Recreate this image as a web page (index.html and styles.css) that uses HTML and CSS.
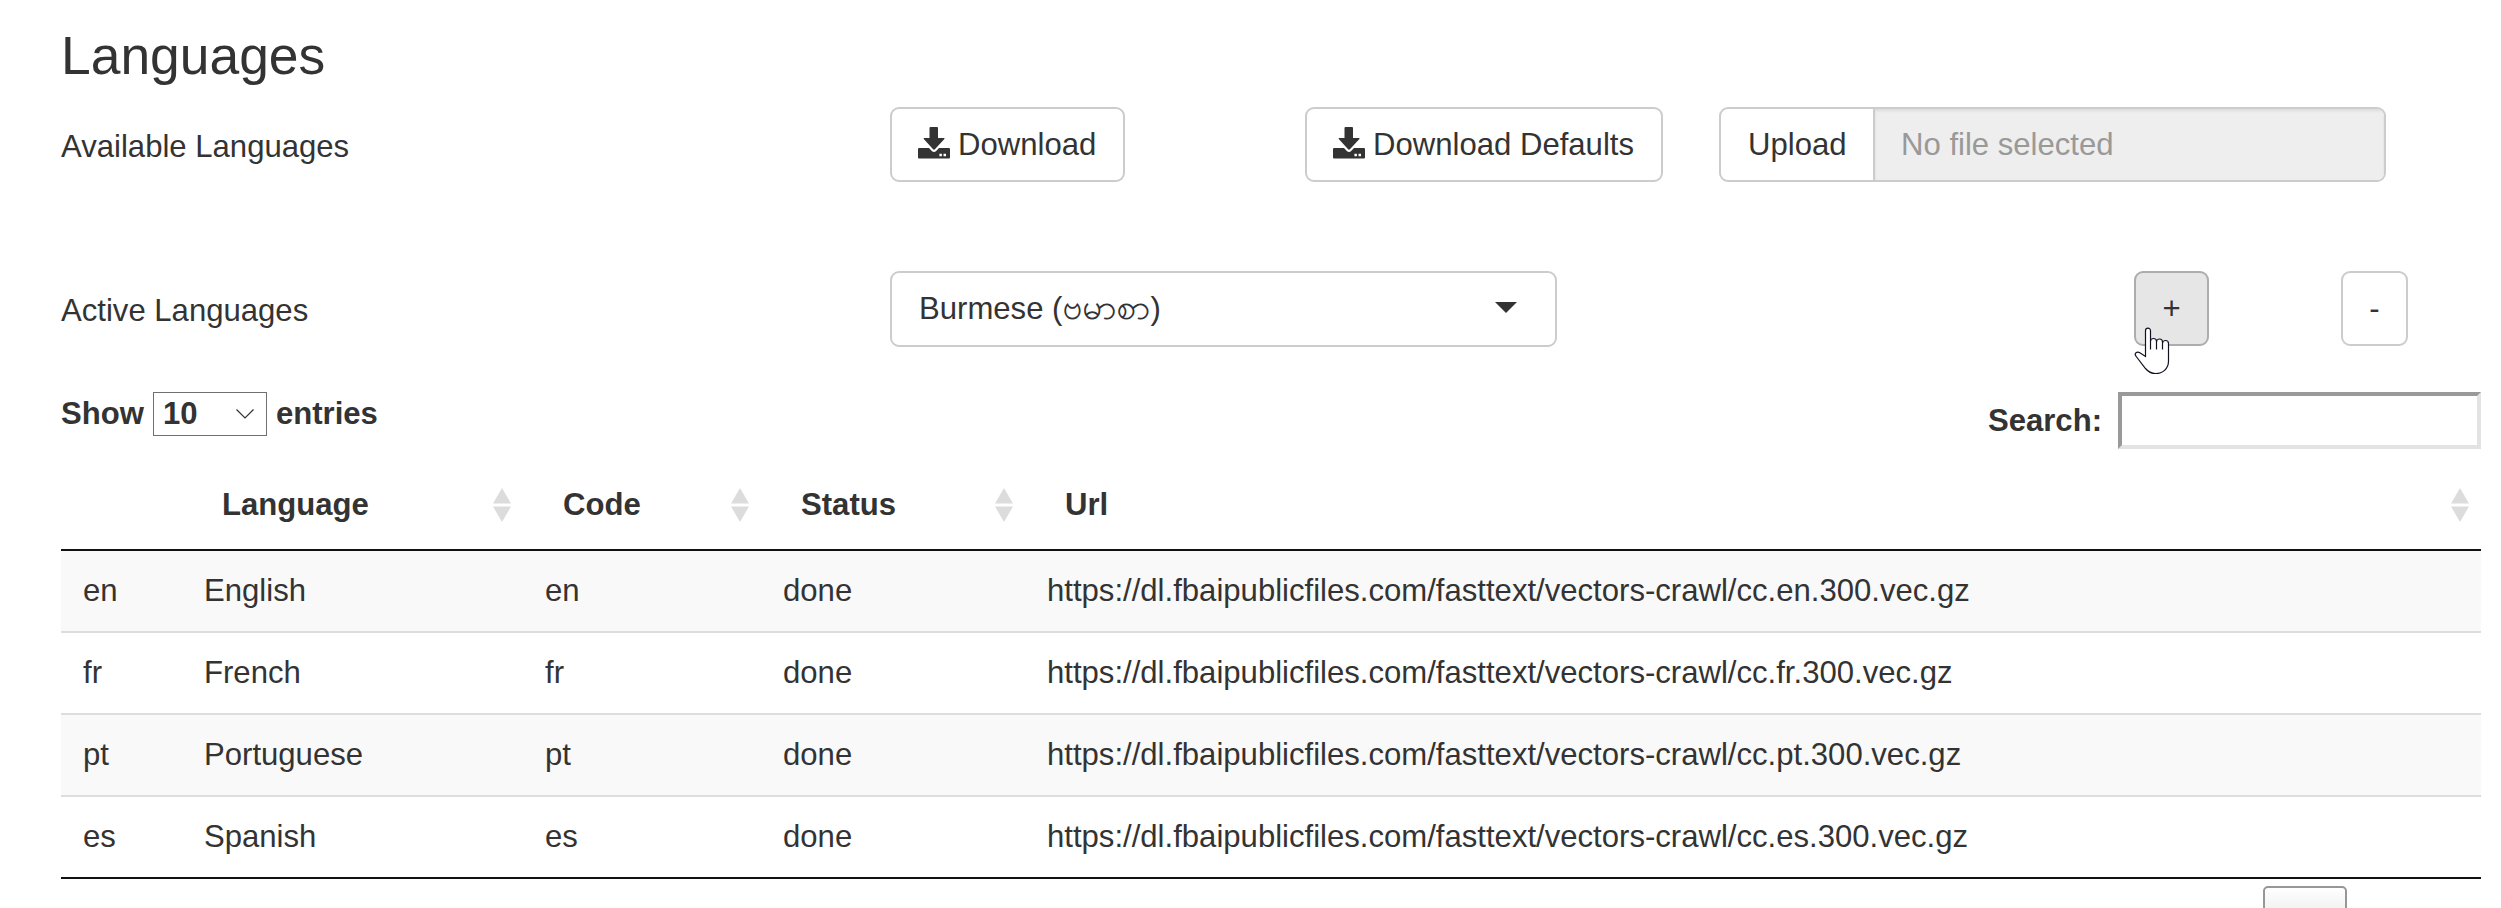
FILE: index.html
```html
<!DOCTYPE html>
<html lang="en">
<head>
<meta charset="utf-8">
<title>Languages</title>
<link rel="stylesheet" href="styles.css">
</head>
<body>
<svg class="defs" width="0" height="0" aria-hidden="true">
  <symbol id="install" viewBox="0 0 32 32">
    <path d="M12.500 0h6.500q1 0 1 1v10h6q1 .200.400 1L16.900 22.300q-.900.900-1.800 0L5.800 12q-.600-.800.400-1h5.300V1q0-1 1-1z"/>
    <path fill-rule="evenodd" d="M1 21h10l2.800 3q2.200 2 4.400 0L21 21h10q1 0 1 1v8.500q0 1-1 1H1q-1 0-1-1V22q0-1 1-1zM21.400 26.700v2.500h2.500v-2.500zM25.500 26.700v2.500H28v-2.500z"/>
  </symbol>
  <symbol id="sort" viewBox="0 0 20 34">
    <path d="M10 0l9 15.500H1zM10 34l9-15.500H1z"/>
  </symbol>
</svg>
<main class="page">
  <h2 class="title">Languages</h2>
  <section class="row row-available">
    <div class="cell-label">Available Languages</div>
    <div class="cell-select"><button class="btn"><svg class="icon"><use href="#install"/></svg>Download</button></div>
    <div class="cell-defaults"><button class="btn"><svg class="icon"><use href="#install"/></svg>Download Defaults</button></div>
    <div class="upload"><span class="upload-btn">Upload</span><span class="upload-file">No file selected</span></div>
  </section>
  <section class="row row-active">
    <div class="cell-label">Active Languages</div>
    <div class="select"><span>Burmese (<span class="native">ဗမာစာ</span>)</span><svg class="caret" viewBox="0 0 22 11"><path d="M0 0h22L11 11z"/></svg></div>
    <div class="actions">
      <button class="btn btn-add">+<svg class="pointer" viewBox="-1 -1 36 48"><path d="M10.500 28.500V2.700a2.500 2.500 0 0 1 5 0V21.500V13.500a2.800 2.800 0 0 1 6 0V21.500V14a2.900 2.900 0 0 1 6 0V21.500V15.500a2.900 2.900 0 0 1 6 0V33c0 7.500-5.500 12.500-13 12.500-4.500 0-7.500-2-10-5L1.200 28.500c-2.600-3.500.800-5.500 4-3.500z"/></svg></button>
      <button class="btn btn-remove">-</button>
    </div>
  </section>
  <div class="controls">
    <div class="length">Show <span class="length-select">10<svg class="chevron" viewBox="0 0 18 10"><path d="M.500.500L9 9L17.500.500"/></svg></span> entries</div>
    <label class="search">Search:<input class="search-input" type="text"></label>
  </div>
  <table class="table">
    <colgroup><col class="c1"><col class="c2"><col class="c3"><col class="c4"><col></colgroup>
    <thead><tr>
      <th></th>
      <th><div class="head">Language<svg class="sort"><use href="#sort"/></svg></div></th>
      <th><div class="head">Code<svg class="sort"><use href="#sort"/></svg></div></th>
      <th><div class="head">Status<svg class="sort"><use href="#sort"/></svg></div></th>
      <th><div class="head">Url<svg class="sort"><use href="#sort"/></svg></div></th>
    </tr></thead>
    <tbody>
      <tr><td>en</td><td>English</td><td>en</td><td>done</td><td>https://dl.fbaipublicfiles.com/fasttext/vectors-crawl/cc.en.300.vec.gz</td></tr>
      <tr><td>fr</td><td>French</td><td>fr</td><td>done</td><td>https://dl.fbaipublicfiles.com/fasttext/vectors-crawl/cc.fr.300.vec.gz</td></tr>
      <tr><td>pt</td><td>Portuguese</td><td>pt</td><td>done</td><td>https://dl.fbaipublicfiles.com/fasttext/vectors-crawl/cc.pt.300.vec.gz</td></tr>
      <tr><td>es</td><td>Spanish</td><td>es</td><td>done</td><td>https://dl.fbaipublicfiles.com/fasttext/vectors-crawl/cc.es.300.vec.gz</td></tr>
    </tbody>
  </table>
  <div class="pager"><span class="page-btn"></span></div>
</main>
</body>
</html>
```
FILE: styles.css
```css
* { box-sizing: border-box; }
html, body { margin: 0; height: 908px; overflow: hidden; background: #fff; }
body {
  font: 31.1px/44px "Liberation Sans", Arial, "Noto Sans", "Padauk", sans-serif;
  color: #333;
}
.defs { position: absolute; }
.page { width: 2501px; padding: 0 20px 0 61px; }
.title { margin: 0; padding-top: 27px; height: 107px; font-size: 53.4px; line-height: 58px; font-weight: 400; }
.row { display: flex; height: 164px; align-items: flex-start; }
.cell-label { width: 829px; padding-top: 18px; }
.cell-select { width: 415px; }
.cell-defaults { width: 414px; }
.btn {
  display: inline-flex; align-items: center; justify-content: center;
  height: 75px; padding: 0 27px 0 26px; border: 2px solid #ccc; border-radius: 9px;
  background: #fff; color: #333; font: inherit;
}
.icon { width: 32px; height: 32px; margin: 0 8px 3px 0; fill: #333; }
.upload {
  display: flex; width: 667px; height: 75px; border: 2px solid #ccc;
  border-radius: 9px; overflow: hidden; line-height: 71px;
}
.upload-btn { width: 154px; padding-left: 27px; border-right: 2px solid #ccc; }
.upload-file { flex: 1; padding-left: 26px; background: #eee; color: #999; box-shadow: inset 0 2px 3px rgba(0,0,0,.08); }
.row-active { height: 121px; }
.select {
  display: flex; align-items: center; justify-content: space-between;
  width: 667px; height: 76px; padding: 0 38px 0 27px;
  border: 2px solid #ccc; border-radius: 9px;
}
.native { font-size: 34.8px; line-height: 1; }
.caret { width: 22px; height: 11px; margin-bottom: 3px; fill: #333; }
.actions { display: flex; flex: 1; justify-content: flex-end; gap: 132px; padding-right: 73px; }
.btn-add { position: relative; width: 75px; padding: 0; border-color: #adadad; background: #e6e6e6; }
.btn-remove { width: 67px; padding: 0; }
.pointer {
  position: absolute; left: -2px; top: 54px; width: 36px; height: 48px;
  fill: #fff; stroke: #112; stroke-width: 1.2;
}
.controls { display: flex; justify-content: space-between; height: 75px; font-weight: 700; }
.length { display: flex; align-items: center; gap: 9px; height: 44px; }
.length-select {
  display: flex; align-items: center; justify-content: space-between;
  width: 114px; height: 44px; padding: 0 12px 0 9px; border: 1px solid #707070;
}
.chevron { width: 18px; height: 10px; fill: none; stroke: #333; stroke-width: 1.2; }
.search { display: flex; align-items: center; height: 57px; }
.search-input { width: 363px; height: 57px; margin-left: 16px; border: 4px solid; border-color: #999 #e3e3e3 #e3e3e3 #999; background: #fff; }
.table { width: 2420px; table-layout: fixed; border-collapse: separate; border-spacing: 0; border-bottom: 2px solid #111; }
.c1 { width: 121px; }
.c2 { width: 341px; }
.c3 { width: 238px; }
.c4 { width: 264px; }
th { height: 84px; padding: 0 11px 7px 40px; border-bottom: 2px solid #111; text-align: left; }
.head { display: flex; align-items: center; justify-content: space-between; }
.sort { width: 20px; height: 34px; fill: #dcdcdc; }
td { height: 80px; padding: 0 22px; }
tbody tr + tr td { height: 82px; border-top: 2px solid #ddd; }
tbody tr:nth-child(odd) { background: #f9f9f9; }
.pager { display: flex; justify-content: flex-end; padding: 7px 134px 0 0; }
.page-btn { width: 84px; height: 60px; border: 2px solid #979797; border-radius: 5px; background: linear-gradient(#fff, #dcdcdc); }
```
